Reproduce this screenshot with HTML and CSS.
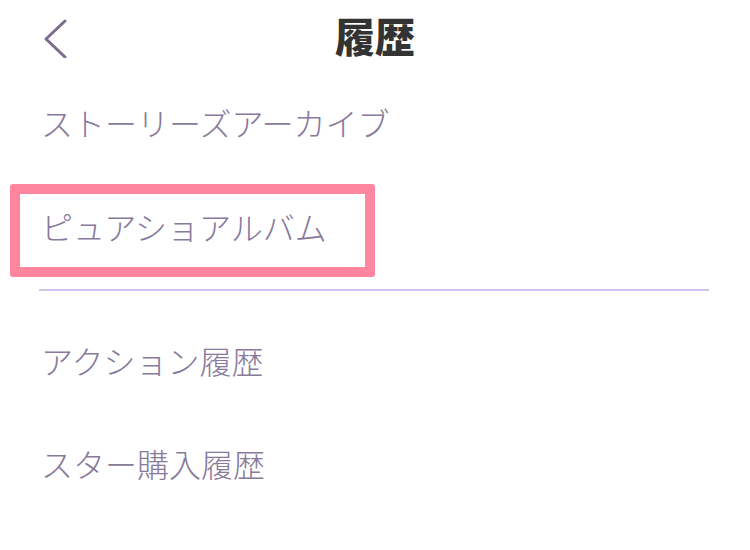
FILE: index.html
```html
<!DOCTYPE html>
<html lang="ja">
<head>
<meta charset="utf-8">
<link rel="stylesheet" href="styles.css">
</head>
<body>
<div class="page">
  <header class="header">
    <div class="back">
      <svg width="26" height="40" viewBox="0 0 26 40">
        <polyline points="22,3 3,21 22,39" fill="none" stroke="#7b6c90" stroke-width="3" stroke-linecap="round" stroke-linejoin="round"/>
      </svg>
    </div>
    <h1 class="title">履歴</h1>
    <div class="spacer"></div>
  </header>
  <div class="item item-first">ストーリーズアーカイブ</div>
  <div class="highlight">
    <div class="item-inner">ピュアショアルバム</div>
  </div>
  <div class="divider"></div>
  <div class="item item-third">アクション履歴</div>
  <div class="item">スター購入履歴</div>
</div>
</body>
</html>
```
FILE: styles.css
```css
html, body {
  margin: 0;
  padding: 0;
  background: #ffffff;
}
body {
  font-family: "Noto Sans CJK JP", "Noto Sans", sans-serif;
  width: 750px;
  height: 550px;
  overflow: hidden;
}
.page {
  display: flex;
  flex-direction: column;
}
.header {
  height: 75px;
  display: grid;
  grid-template-columns: 1fr auto 1fr;
  align-items: center;
}
.back {
  padding-left: 43px;
  display: flex;
  align-items: center;
}
.back svg {
  display: block;
}
.title {
  margin: 0;
  font-size: 40px;
  font-weight: 900;
  color: #333333;
  line-height: 75px;
  position: relative;
  top: -2px;
}
.item {
  height: 103px;
  line-height: 103px;
  font-size: 32px;
  font-weight: 300;
  color: #877a9b;
  padding-left: 41px;
  position: relative;
  top: -2px;
}
.item-first {
  height: 99px;
  line-height: 99px;
}
.highlight {
  margin-top: 10px;
  margin-left: 10px;
  width: 345px;
  height: 73px;
  border: 10px solid #ff869e;
  border-radius: 3px;
}
.item-inner {
  line-height: 68px;
  font-size: 32px;
  font-weight: 300;
  color: #877a9b;
  padding-left: 21px;
  position: relative;
  top: -2px;
}
.divider {
  margin-top: 12px;
  margin-left: 39px;
  width: 670px;
  height: 2px;
  background: #d5c3ef;
}
.item-third {
  margin-top: 20px;
}
```
